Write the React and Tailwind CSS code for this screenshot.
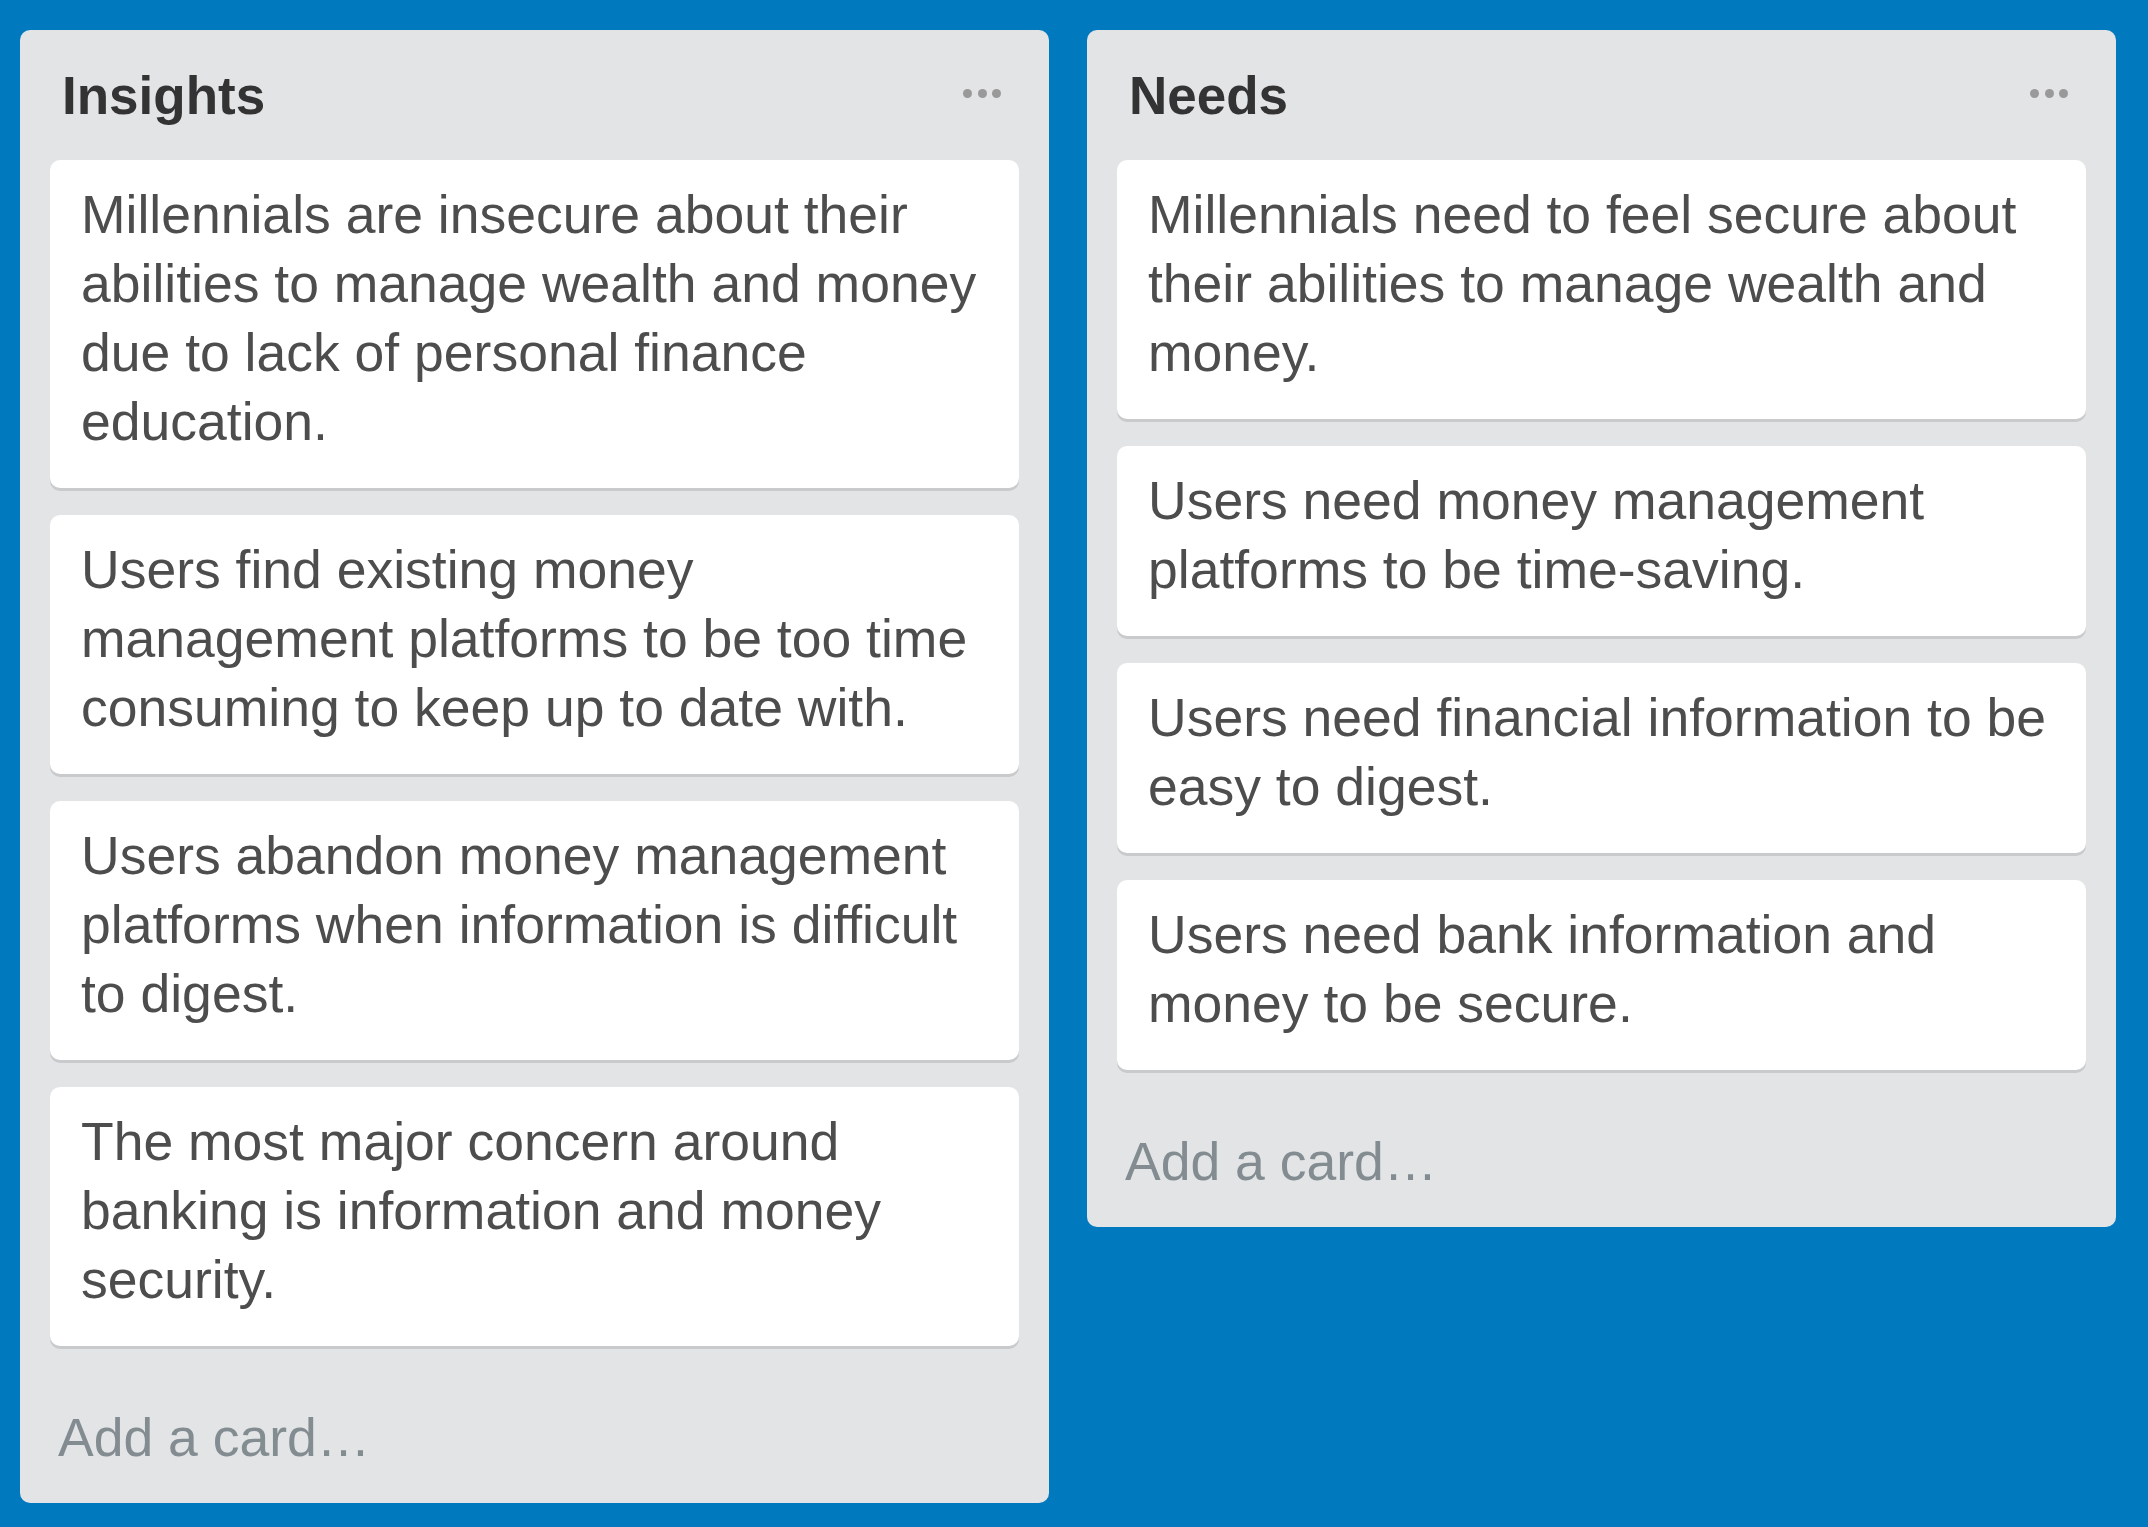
import React from "react";

const lists = [
  {
    title: "Insights",
    cards: [
      "Millennials are insecure about their abilities to manage wealth and money due to lack of personal finance education.",
      "Users find existing money management platforms to be too time consuming to keep up to date with.",
      "Users abandon money management platforms when information is difficult to digest.",
      "The most major concern around banking is information and money security.",
    ],
  },
  {
    title: "Needs",
    cards: [
      "Millennials need to feel secure about their abilities to manage wealth and money.",
      "Users need money management platforms to be time-saving.",
      "Users need financial information to be easy to digest.",
      "Users need bank information and money to be secure.",
    ],
  },
];

function Dots() {
  return (
    <div className="flex gap-[5.5px] mt-[59px] mr-[48px]">
      <span className="block w-[9px] h-[9px] rounded-full bg-[#999999]" />
      <span className="block w-[9px] h-[9px] rounded-full bg-[#999999]" />
      <span className="block w-[9px] h-[9px] rounded-full bg-[#999999]" />
    </div>
  );
}

function List({ title, cards }) {
  return (
    <div className="w-[1029px] shrink-0 rounded-[10px] bg-[#e2e4e6] flex flex-col">
      <div className="h-[130px] flex justify-between items-start">
        <h2 className="pt-[39px] pl-[42px] text-[53px] leading-none font-bold text-[#333333]">
          {title}
        </h2>
        <Dots />
      </div>
      <div className="flex flex-col gap-[27px] px-[30px]">
        {cards.map((c, i) => (
          <div
            key={i}
            className="bg-white rounded-[10px] shadow-[0_3px_0_#c8cacc] pt-[20px] pb-[32px] pl-[31px] pr-[12px] text-[53.5px] leading-[69px] text-[#4d4d4d]"
          >
            {c}
          </div>
        ))}
      </div>
      <div className="pt-[57px] pb-[31px] pl-[38px] text-[53.5px] leading-[69px] text-[#838c91]">
        Add a card…
      </div>
    </div>
  );
}

export default function App() {
  return (
    <div
      className="w-full min-h-screen bg-[#0079bf] flex items-start gap-[38px] pl-[20px] pt-[30px]"
      style={{ fontFamily: '"Liberation Sans", Arial, Helvetica, sans-serif' }}
    >
      {lists.map((l) => (
        <List key={l.title} {...l} />
      ))}
    </div>
  );
}
